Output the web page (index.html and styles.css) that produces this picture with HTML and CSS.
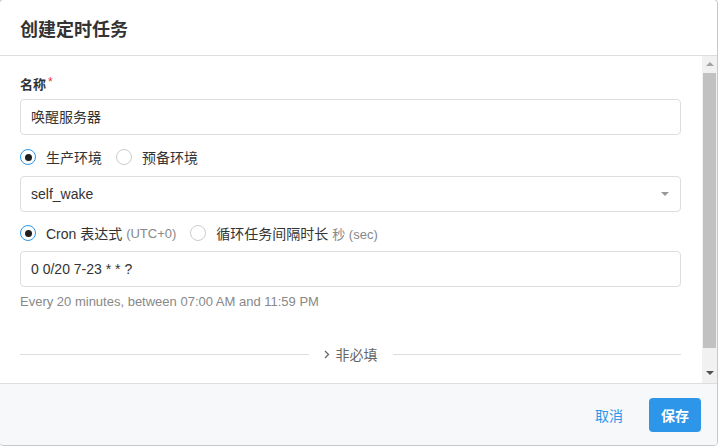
FILE: index.html
```html
<!DOCTYPE html>
<html>
<head>
    <title>创建定时任务</title>
    <link rel="stylesheet" href="styles.css">
</head>
<body>

<div class="dialog">
    <div class="dialog-header">
        <h3>创建定时任务</h3>
    </div>

    <div class="dialog-body">
        <div class="form-pane">
            <label class="field-label">名称<span class="required">*</span></label>
            <div class="text-input">唤醒服务器</div>

            <div class="radio-row env-row">
                <span class="radio-item"><span class="radio checked"></span>生产环境</span>
                <span class="radio-item"><span class="radio"></span>预备环境</span>
            </div>
            <div class="text-input select">
                <span>self_wake</span>
                <span class="caret"></span>
            </div>

            <div class="radio-row cron-row">
                <span class="radio-item"><span class="radio checked"></span>Cron 表达式 <span class="muted">(UTC+0)</span></span>
                <span class="radio-item"><span class="radio"></span>循环任务间隔时长 <span class="muted">秒 (sec)</span></span>
            </div>
            <div class="text-input cron-input">0 0/20 7-23 * * ?</div>
            <div class="help-text">Every 20 minutes, between 07:00 AM and 11:59 PM</div>

            <div class="divider">
                <span class="divider-line"></span>
                <span class="divider-text">
                    <svg width="6" height="9" viewBox="0 0 6 9"><path d="M1 1 L4.5 4.5 L1 8" fill="none" stroke="#666" stroke-width="1.3"/></svg>
                    非必填
                </span>
                <span class="divider-line"></span>
            </div>
        </div>

        <div class="scrollbar">
            <span class="arrow up"></span>
            <div class="thumb"></div>
            <span class="arrow down"></span>
        </div>
    </div>

    <div class="dialog-footer">
        <button class="btn-link">取消</button>
        <button class="btn-primary">保存</button>
    </div>
</div>

</body>
</html>
```

FILE: styles.css
```css
body {
    margin: 0;
    background-color: #fff;
    font-family: "Liberation Sans", "Noto Sans CJK SC", sans-serif;
    color: #333;
    overflow: hidden;
}
.dialog {
    box-sizing: border-box;
    width: 719px;
    height: 447px;
    margin: -1px 0 0 -1px;
    border: 1px solid #c8c8c8;
    border-radius: 4px;
    background: #fff;
    display: flex;
    flex-direction: column;
    overflow: hidden;
}
.dialog-header {
    height: 55px;
    border-bottom: 1px solid #ddd;
    padding-left: 20px;
    display: flex;
    align-items: center;
    flex-shrink: 0;
}
.dialog-header h3 {
    margin: 0;
    font-size: 18px;
    font-weight: bold;
    color: #333;
}
.dialog-body {
    height: 327px;
    display: flex;
    flex-shrink: 0;
}
.form-pane {
    flex: 1;
    padding: 20px 21px 0 20px;
    overflow: hidden;
}
.field-label {
    display: block;
    font-size: 13px;
    font-weight: bold;
    line-height: 18px;
    color: #333;
}
.required {
    color: #e33;
    font-weight: normal;
    margin-left: 2px;
    position: relative;
    top: -3px;
    font-size: 12px;
}
.text-input {
    height: 34px;
    margin-top: 5px;
    border: 1px solid #ddd;
    border-radius: 4px;
    padding: 0 10px;
    font-size: 14px;
    line-height: 34px;
    color: #333;
}
.select {
    display: flex;
    justify-content: space-between;
    align-items: center;
    margin-top: 9px;
}
.caret {
    width: 0;
    height: 0;
    border-left: 4px solid transparent;
    border-right: 4px solid transparent;
    border-top: 4px solid #999;
    margin-right: 1px;
}
.radio-row {
    display: flex;
    align-items: center;
    height: 20px;
    font-size: 14px;
}
.env-row {
    margin-top: 12px;
}
.cron-row {
    margin-top: 11px;
}
.cron-input {
    margin-top: 8px;
}
.radio-item {
    display: flex;
    align-items: center;
    margin-right: 14px;
    white-space: pre;
}
.radio {
    width: 14px;
    height: 14px;
    border: 1px solid #ccc;
    border-radius: 50%;
    margin-right: 10px;
    display: flex;
    align-items: center;
    justify-content: center;
}
.radio.checked {
    border-color: #2d96e9;
}
.radio.checked::after {
    content: "";
    width: 7px;
    height: 7px;
    border-radius: 50%;
    background: #1f1f1f;
}
.muted {
    color: #888;
    font-size: 13px;
}
.help-text {
    margin-top: 7px;
    font-size: 13px;
    line-height: 16px;
    color: #888;
}
.divider {
    display: flex;
    align-items: center;
    margin-top: 34px;
}
.divider-line {
    flex: 1;
    height: 1px;
    background: #ddd;
}
.divider-text {
    padding: 0 15px;
    font-size: 14px;
    color: #666;
    display: flex;
    align-items: center;
    gap: 6px;
}
.scrollbar {
    width: 15px;
    background: #f1f1f1;
    display: flex;
    flex-direction: column;
    align-items: center;
}
.arrow {
    width: 0;
    height: 0;
    border-left: 4px solid transparent;
    border-right: 4px solid transparent;
}
.arrow.up {
    border-bottom: 4px solid #a3a3a3;
    margin: 6px 0 7px;
}
.arrow.down {
    border-top: 4px solid #505050;
    margin: auto 0 8px;
}
.thumb {
    width: 13px;
    height: 275px;
    background: #c1c1c1;
}
.dialog-footer {
    flex: 1;
    border-top: 1px solid #ddd;
    background: #f7f8fa;
    display: flex;
    justify-content: flex-end;
    align-items: center;
    padding-right: 16px;
}
button {
    font-family: inherit;
    font-size: 14px;
    border: none;
    cursor: pointer;
}
.btn-link {
    background: none;
    color: #2d96e9;
    padding: 0;
    margin-right: 26px;
}
.btn-primary {
    width: 52px;
    height: 34px;
    background: #2d96e9;
    color: #fff;
    border-radius: 4px;
    font-weight: bold;
}
```
